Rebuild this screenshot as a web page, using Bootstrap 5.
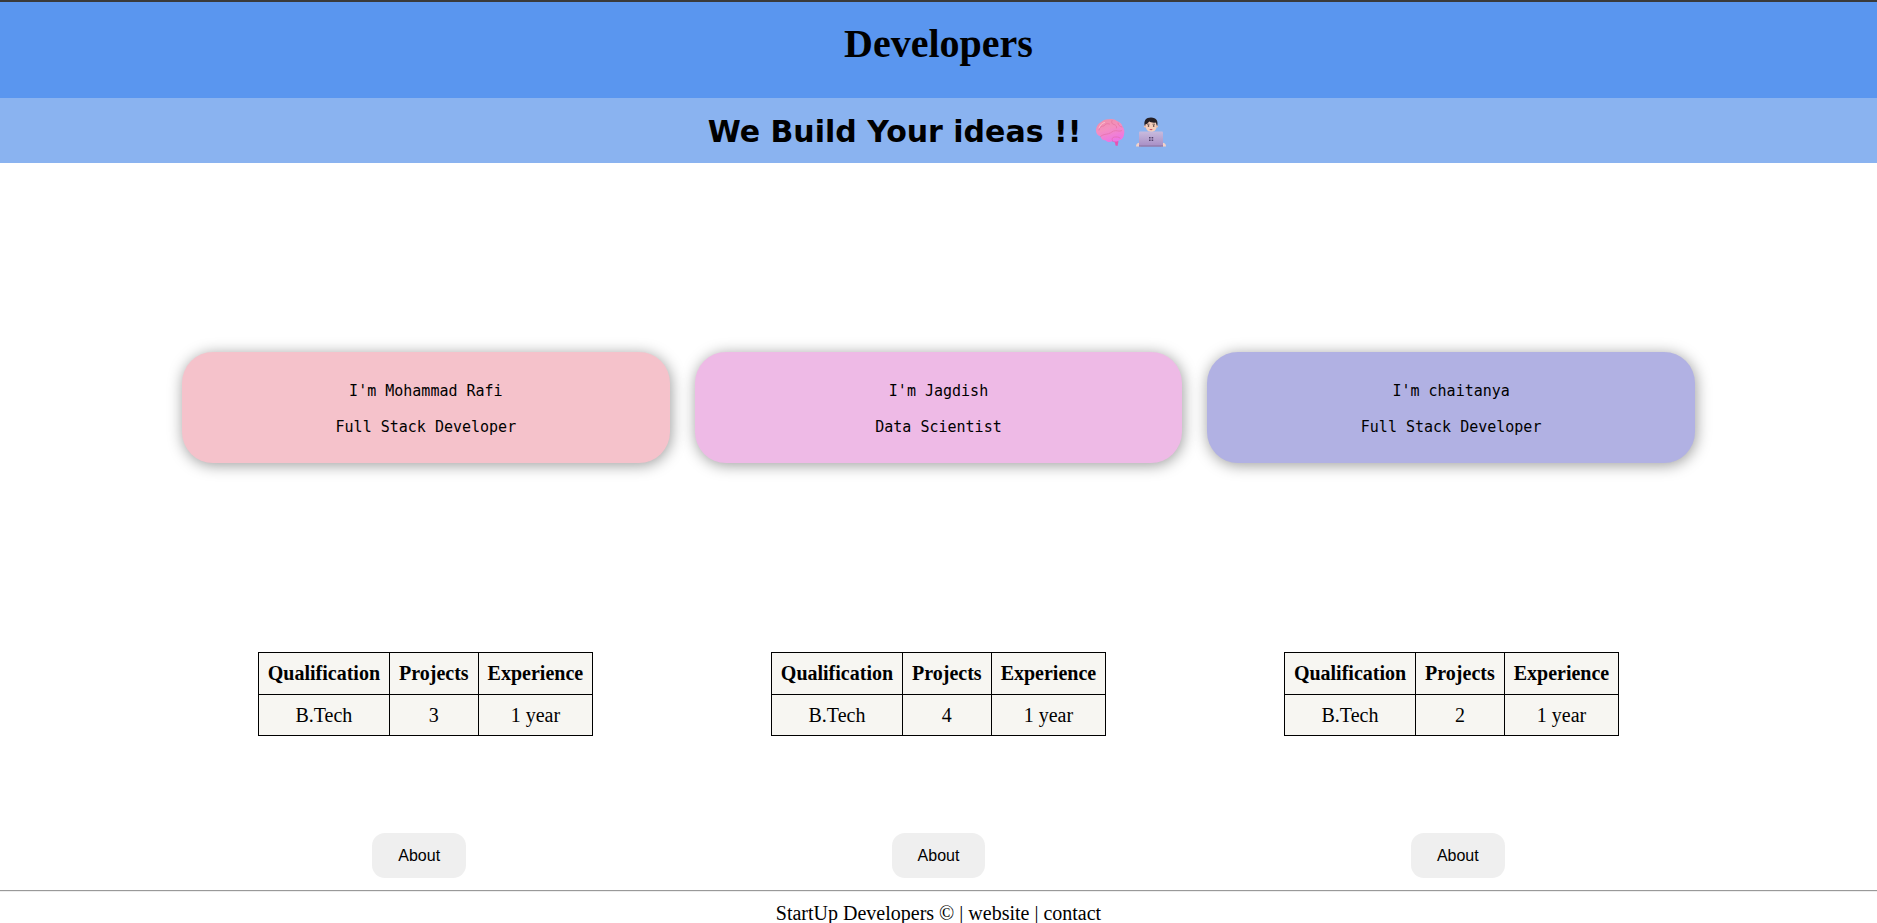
<!DOCTYPE html>
<html lang="en">
<head>
<meta charset="utf-8">
<meta name="viewport" content="width=device-width, initial-scale=1">
<title>Developers</title>
<link href="https://cdn.jsdelivr.net/npm/bootstrap@5.3.0/dist/css/bootstrap.min.css" rel="stylesheet">
<style>
  body { font-family: "Liberation Serif", "Times New Roman", serif; font-size: 20px; line-height: 20px; color: #000; }
  .site-head { background: #5a96ef; border-top: 2px solid #3a3a3a; padding: 19px 0 31px; }
  .site-head h1 { font-size: 40px; line-height: 46px; font-weight: 700; }
  .tagline { background: #8ab3f0; padding: 16px 0 13px; }
  .tagline h2 { font-family: "DejaVu Sans", Verdana, sans-serif; font-size: 30px; line-height: 36px; font-weight: 700; }
  .emoji { width: 30px; height: 30px; }
  .icons { gap: 11px; margin: 0 3px 0 14px; }
  .people { width: 80.6%; gap: 25px; margin-top: 189px; }
  .person { border-radius: 31px; padding: 30px 16px 27px; box-shadow: 1px 2px 15px rgba(0, 0, 0, .4);
    font-family: "DejaVu Sans Mono", Consolas, monospace; font-size: 15px; line-height: 18px; }
  .person p + p { margin-top: 18px; }
  .rose { background: #f5c2cb; }
  .orchid { background: #eebae6; }
  .iris { background: #b1b1e3; }
  .stats { width: 82%; margin-top: 189px; }
  .stats table { background: #f7f6f2; }
  .stats th, .stats td { border: 1px solid #000; padding: 10px 9px; line-height: 21px; text-align: center; }
  .stats td { padding-bottom: 9px; }
  .actions { width: 83%; margin-top: 97px; }
  .about-btn { background: #efefef; color: #000; border: 0; border-radius: 13px; padding: 12px 26px;
    font-family: "Liberation Sans", Arial, sans-serif; font-size: 16px; line-height: 21px; }
  .about-btn:hover { background: #e0e0e0; }
  .site-foot { border-top: 1px solid #999; box-shadow: inset 0 1px #eee; margin-top: 12px; padding-top: 12px; }
  .site-foot a { color: #000; text-decoration: none; }
</style>
</head>
<body>
<header>
  <div class="site-head text-center"><h1 class="m-0">Developers</h1></div>
  <div class="tagline d-flex justify-content-center align-items-center">
    <h2 class="m-0">We Build Your ideas !!</h2>
    <div class="icons d-flex">
    <svg class="emoji" viewBox="0 0 30 30" role="img" aria-label="Brain">
      <defs><linearGradient id="brainFill" x1="0" y1="0" x2="0.4" y2="1"><stop offset="0" stop-color="#ef8fa6"/><stop offset=".5" stop-color="#f48fc0"/><stop offset="1" stop-color="#ee76e2"/></linearGradient></defs>
      <path d="M18 23l4 0.5 1.5 1-1 4.500-2-.5-.5-3-3-1.500z" fill="#e653b4"/>
      <path d="M1 13.500C1 10 3 6.500 6 5.200 8 3 11 2 14 2.300c3-.8 6 0 8 1.700 3 1 5 3 5.500 5.500 1.800 2 2.300 5.500 1.500 8-.3 3-2 5-4.500 5.800-2.500 1.700-5 1.400-7 .7-2.500 1.600-5.500 1.200-7-.8-3 .2-4.500-1.300-5-3.700C2.500 18.500 1 16.500 1 13.500z" fill="url(#brainFill)"/>
      <g fill="none" stroke="#dc638f" stroke-width=".8" stroke-linecap="round" opacity=".55"><path d="M4 13c.5-3 2.500-4 5-4 1-2 3-3 5.500-2"/><path d="M5.500 19.500c2-2.200 5-2 8-2.800 3-.8 4-3 7-3 2.500 0 4 1 6 0"/><path d="M17 3.500c-1 2 0 3.500 2 4s3 2 2.500 3.500"/><path d="M23 6c0 2 1.500 3.500 4 4"/><path d="M17.500 24c-1-2 0-4 2-4s4-.3 5.500 1"/></g>
      <path d="M4 11C5 8 7 6 9.500 5.500" fill="none" stroke="#ffbecb" stroke-width="1" stroke-linecap="round"/>
    </svg>
    <svg class="emoji" viewBox="0 0 30 30" role="img" aria-label="Technologist">
      <defs><linearGradient id="lidFill" x1="0" y1="0" x2="0" y2="1"><stop offset="0" stop-color="#c8bbdd"/><stop offset="1" stop-color="#a78dc5"/></linearGradient></defs>
      <path d="M9 10C7 3.500 10 .5 15 .5c5.500 0 7.500 3.500 6 9.500z" fill="#251f24"/>
      <path d="M9.300 7.500c2-.5 3-2 4-3 1 1 4 1.500 6.500 1l1 3c0 4-2.300 6.500-5.500 6.500-3.500 0-6-3-6-7.500z" fill="#f5cebb"/>
      <circle cx="9" cy="9.500" r="1.100" fill="#eebda9"/><circle cx="21" cy="9.500" r="1.100" fill="#eebda9"/>
      <path d="M11 7.200h2.500M16.500 7.200H19" stroke="#3a2a2a" stroke-width=".7"/>
      <circle cx="12.500" cy="9" r=".8" fill="#2d2225"/><circle cx="17.700" cy="9" r=".8" fill="#2d2225"/>
      <path d="M13.300 12.300q1.800-.8 3.500 0-1.700 2-3.500 0z" fill="#c84961"/>
      <path d="M0 29.500c0-2.500 1-3.500 4-4l1 4zM30 29.500c0-2.500-1-3.500-4-4l-1 4z" fill="#f5d2c6"/>
      <path d="M4 14.500h22q1 0 1 1v14H3v-14q0-1 1-1z" fill="url(#lidFill)"/>
      <path d="M3 29h24" stroke="#88729e" stroke-width="1"/>
      <path d="M13 20h1.600v1.600H13zM15.600 20h1.600v1.600h-1.600zM13 22.500h1.600v1.600H13zM15.600 22.500h1.600v1.600h-1.600z" fill="#54446d"/>
    </svg>
    </div>
  </div>
</header>

<main>
  <section class="people d-flex mx-auto text-center">
    <div class="person rose flex-fill w-100"><p class="mb-0">I'm Mohammad Rafi</p><p class="mb-0">Full Stack Developer</p></div>
    <div class="person orchid flex-fill w-100"><p class="mb-0">I'm Jagdish</p><p class="mb-0">Data Scientist</p></div>
    <div class="person iris flex-fill w-100"><p class="mb-0">I'm chaitanya</p><p class="mb-0">Full Stack Developer</p></div>
  </section>

  <section class="stats mx-auto">
    <div class="row g-0">
      <div class="col d-flex justify-content-center">
        <table><thead><tr><th>Qualification</th><th>Projects</th><th>Experience</th></tr></thead><tbody><tr><td>B.Tech</td><td>3</td><td>1 year</td></tr></tbody></table>
      </div>
      <div class="col d-flex justify-content-center">
        <table><thead><tr><th>Qualification</th><th>Projects</th><th>Experience</th></tr></thead><tbody><tr><td>B.Tech</td><td>4</td><td>1 year</td></tr></tbody></table>
      </div>
      <div class="col d-flex justify-content-center">
        <table><thead><tr><th>Qualification</th><th>Projects</th><th>Experience</th></tr></thead><tbody><tr><td>B.Tech</td><td>2</td><td>1 year</td></tr></tbody></table>
      </div>
    </div>
  </section>

  <section class="actions mx-auto">
    <div class="row g-0 text-center">
      <div class="col"><button type="button" class="about-btn">About</button></div>
      <div class="col"><button type="button" class="about-btn">About</button></div>
      <div class="col"><button type="button" class="about-btn">About</button></div>
    </div>
  </section>
</main>

<footer class="site-foot text-center">StartUp Developers © | <a href="#website">website</a> | <a href="#contact">contact</a></footer>
<script src="https://cdn.jsdelivr.net/npm/bootstrap@5.3.0/dist/js/bootstrap.bundle.min.js"></script>
</body>
</html>
